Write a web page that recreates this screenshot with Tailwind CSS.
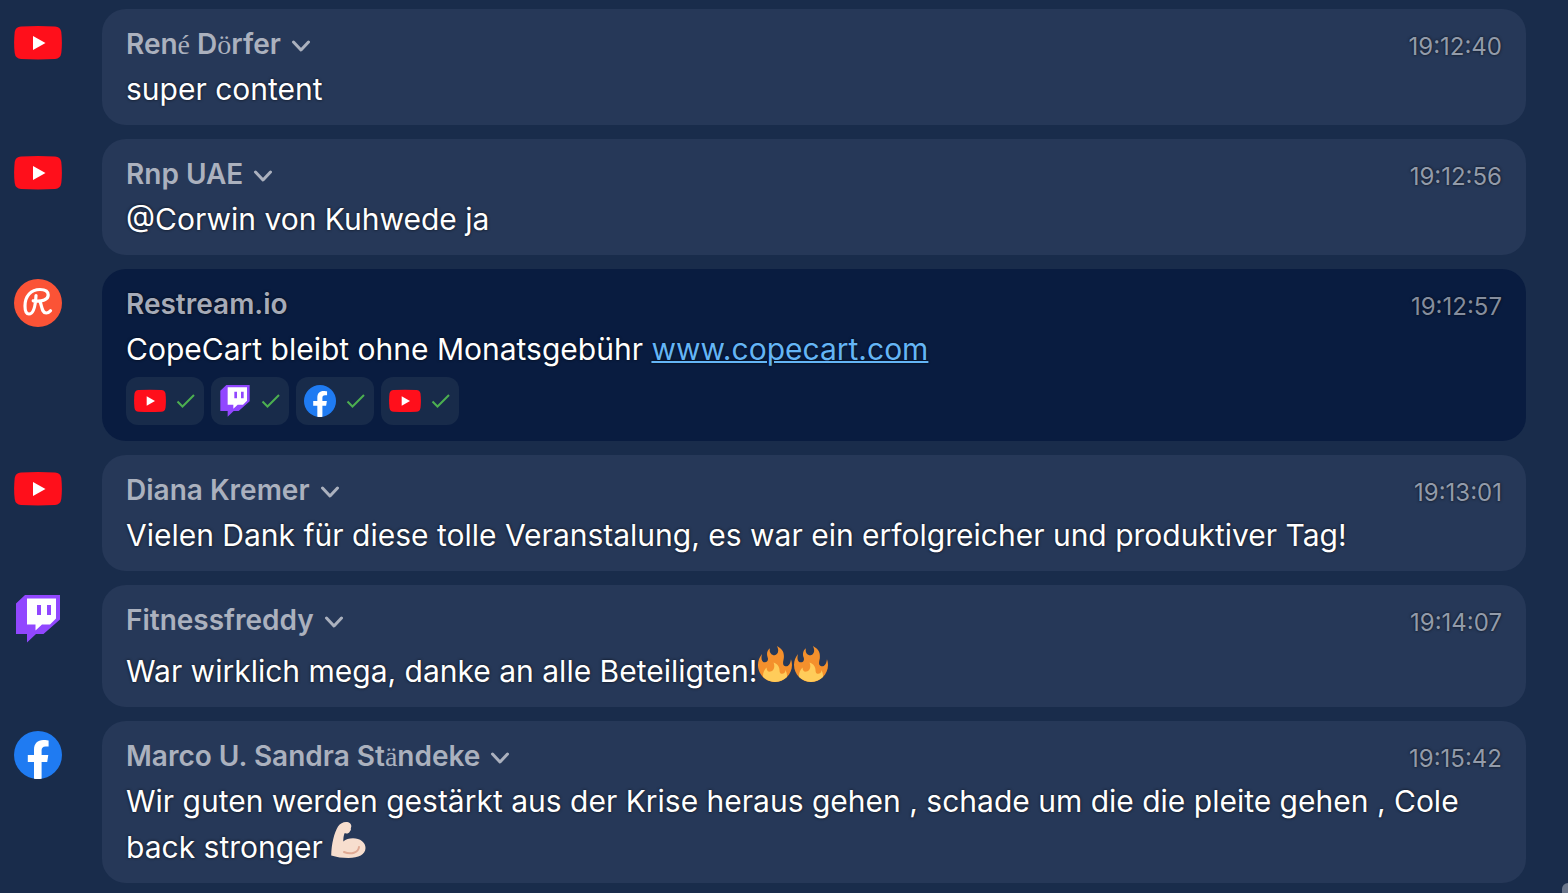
<!DOCTYPE html>
<html lang="de">
<head>
    <meta charset="UTF-8">
    <meta name="viewport" content="width=device-width, initial-scale=1.0">
    <title>Chat</title>
    <script src="https://cdn.jsdelivr.net/npm/@tailwindcss/browser@4"></script>
</head>
<body class="relative min-h-screen overflow-x-hidden bg-[#192c4b] font-['Inter','Liberation_Sans',sans-serif] text-white">
    <!-- Shared icons -->
    <svg class="hidden">
        <symbol id="youtube" viewBox="0 0 48 48">
            <path fill="#ff0f1b" d="M7 7.400Q24 6.600 41 7.400Q46.500 7.700 47.300 13Q48.500 24 47.300 34Q46.500 39.700 41 40Q24 40.800 7 40Q1.500 39.700 .7 34Q-.5 24 .7 13Q1.500 7.700 7 7.400Z"/>
            <path fill="#fff" d="M19 17v14l12.500-7z"/>
        </symbol>
        <symbol id="twitch" viewBox="0 0 48 48">
            <path fill="#9147ff" d="M11 0h35v24.500L29.500 39H22l-9 8.500V39H2V8.500z"/>
            <path fill="#fff" d="M13 3.500h29v20L36 29.500h-8l-6.500 6v-6H13z"/>
            <path fill="#9147ff" d="M23 10h4v10h-4zM33 10h4v10h-4z"/>
        </symbol>
        <symbol id="facebook" viewBox="0 0 48 48">
            <circle cx="24" cy="24" r="24" fill="#1f7bf2"/>
            <path fill="#fff" d="M20 47.700V31h-6.200v-7H20v-5.300C20 12.500 23.600 9 29.300 9c2.700 0 5.300.5 5.300.5v6h-3c-3 0-4 1.800-4 3.800V24h6.700l-1.100 7h-5.600v16.700a24 24 0 0 1-7.600 0z"/>
        </symbol>
        <symbol id="restream" viewBox="0 0 48 48">
            <circle cx="24" cy="24" r="24" fill="#fb5336"/>
            <path fill="none" stroke="#fff" stroke-width="3.200" stroke-linecap="round" stroke-linejoin="round" d="M22 16.500C21.500 26 20 35 15 35c-3 0-4-3-4-8 0-10 6-16.500 15-16.500 5 0 8.200 2 8.200 5.500 0 4.500-5.500 7-15 5.800M26 22.500c2 4.500 1.800 11.500 6.200 11.500 2 0 3.300-1 4.300-2.200"/>
        </symbol>
        <symbol id="chevron" viewBox="0 0 20 12">
            <path fill="none" stroke="#abb1be" stroke-width="3" stroke-linecap="round" stroke-linejoin="round" d="M2.500 2l7.500 8L17.500 2"/>
        </symbol>
        <symbol id="check" viewBox="0 0 20 16">
            <path fill="none" stroke="#4caf50" stroke-width="2" d="M1.500 8.500l5 5L18 2"/>
        </symbol>
        <symbol id="fire" viewBox="0 0 36 36">
            <path fill="#f4902c" d="M35 19c0-2.062-.367-4.039-1.040-5.868-.46 5.389-3.333 8.157-6.335 6.868-2.812-1.208-.917-5.917-.777-8.164.236-3.809-.012-8.169-6.931-11.794 2.875 5.500.333 8.917-2.333 9.125-2.958.231-5.667-2.542-4.667-7.042-3.238 2.386-3.332 6.402-2.333 9 1.042 2.708-.042 4.958-2.583 5.208-2.840.28-4.418-3.041-2.963-8.333C2.520 10.965 1 14.805 1 19c0 9.389 7.611 17 17 17s17-7.611 17-17z"/>
            <path fill="#ffcc5a" d="M28.394 23.999c.148 3.084-2.561 4.293-4.019 3.709-2.106-.843-1.541-2.291-2.083-5.291s-2.625-5.083-5.708-6c2.250 6.333-1.247 8.667-3.080 9.084-1.872.426-3.753-.001-3.968-4.007C7.352 23.668 6 26.676 6 30c0 .368.023.73.055 1.090C9.125 34.124 13.342 36 18 36s8.875-1.876 11.945-4.910c.032-.36.055-.722.055-1.090 0-2.187-.584-4.236-1.606-6.001z"/>
        </symbol>
        <symbol id="biceps" viewBox="0 0 36 36">
            <path fill="#f7dece" d="M15 0c3.500 0 5.500 2 5.300 4.500-.2 1-.6 1.500-.4 2.500.2 1.200-.6 1.800-1.200 2.700-.7 1.600-2.300 2-5.200 1.600-.9 2.500-1.200 5-1.200 8.200 2.500-2.300 5.700-3.200 9.700-3.200 7 0 12.500 4.200 12.500 9.700 0 6.500-7 10-17 10-6 0-12-.8-17.300-2.500C.5 22 3 11 7 4.500 9 1.500 12 0 15 0z"/>
            <path fill="none" stroke="#e0aa94" stroke-width="2" stroke-linecap="round" d="M28 25c-.5 5.500-8 8-15 5"/>
        </symbol>
    </svg>

    <main class="flex flex-col gap-3.5 py-[9px] pl-3.5 pr-[42px] [text-shadow:0_0_3px_#000c]">
        <article class="flex items-start gap-10">
            <svg class="mt-2.5 size-12 shrink-0" role="img" aria-label="YouTube"><use href="#youtube"/></svg>
            <div class="flex-1 rounded-3xl bg-[#263858] px-6 py-4">
                <header class="mb-1 flex h-10 items-center justify-between">
                    <button class="flex items-center gap-2.5 pb-0.5 text-[28px] font-semibold text-[#abb1be]"><span>Ren<span class="font-['Liberation_Serif'] font-normal">é</span> D<span class="font-['Liberation_Serif'] font-normal">ö</span>rfer</span><svg class="mt-1 h-3 w-5"><use href="#chevron"/></svg></button>
                    <time class="pt-1 text-2xl text-[#929baa]">19:12:40</time>
                </header>
                <p class="text-[30px] leading-10">super content</p>
            </div>
        </article>

        <article class="flex items-start gap-10">
            <svg class="mt-2.5 size-12 shrink-0" role="img" aria-label="YouTube"><use href="#youtube"/></svg>
            <div class="flex-1 rounded-3xl bg-[#263858] px-6 py-4">
                <header class="mb-1 flex h-10 items-center justify-between">
                    <button class="flex items-center gap-2.5 pb-0.5 text-[28px] font-semibold text-[#abb1be]">Rnp UAE<svg class="mt-1 h-3 w-5"><use href="#chevron"/></svg></button>
                    <time class="pt-1 text-2xl text-[#929baa]">19:12:56</time>
                </header>
                <p class="text-[30px] leading-10">@Corwin von Kuhwede ja</p>
            </div>
        </article>

        <article class="flex items-start gap-10">
            <svg class="mt-2.5 size-12 shrink-0" role="img" aria-label="Restream"><use href="#restream"/></svg>
            <div class="flex-1 rounded-3xl bg-[#091c40] px-6 py-4">
                <header class="mb-1 flex h-10 items-center justify-between">
                    <h2 class="pb-0.5 text-[28px] font-semibold text-[#a6abb8]">Restream.io</h2>
                    <time class="pt-1 text-2xl text-[#848d9e]">19:12:57</time>
                </header>
                <p class="text-[30px] leading-10">CopeCart bleibt ohne Monatsgebühr <a href="https://www.copecart.com" class="text-[#64b5f6] underline decoration-2">www.copecart.com</a></p>
                <ul class="mt-2 flex gap-[7px]">
                    <li class="flex h-12 w-[78px] items-center justify-between rounded-xl bg-[#182b4a] px-2"><svg class="size-8"><use href="#youtube"/></svg><svg class="h-4 w-5"><use href="#check"/></svg></li>
                    <li class="flex h-12 w-[78px] items-center justify-between rounded-xl bg-[#182b4a] px-2"><svg class="size-8"><use href="#twitch"/></svg><svg class="h-4 w-5"><use href="#check"/></svg></li>
                    <li class="flex h-12 w-[78px] items-center justify-between rounded-xl bg-[#182b4a] px-2"><svg class="size-8"><use href="#facebook"/></svg><svg class="h-4 w-5"><use href="#check"/></svg></li>
                    <li class="flex h-12 w-[78px] items-center justify-between rounded-xl bg-[#182b4a] px-2"><svg class="size-8"><use href="#youtube"/></svg><svg class="h-4 w-5"><use href="#check"/></svg></li>
                </ul>
            </div>
        </article>

        <article class="flex items-start gap-10">
            <svg class="mt-2.5 size-12 shrink-0" role="img" aria-label="YouTube"><use href="#youtube"/></svg>
            <div class="flex-1 rounded-3xl bg-[#263858] px-6 py-4">
                <header class="mb-1 flex h-10 items-center justify-between">
                    <button class="flex items-center gap-2.5 pb-0.5 text-[28px] font-semibold text-[#abb1be]">Diana Kremer<svg class="mt-1 h-3 w-5"><use href="#chevron"/></svg></button>
                    <time class="pt-1 text-2xl text-[#929baa]">19:13:01</time>
                </header>
                <p class="text-[30px] leading-10">Vielen Dank für diese tolle Veranstalung, es war ein erfolgreicher und produktiver Tag!</p>
            </div>
        </article>

        <article class="flex items-start gap-10">
            <svg class="mt-2.5 size-12 shrink-0" role="img" aria-label="Twitch"><use href="#twitch"/></svg>
            <div class="flex-1 rounded-3xl bg-[#263858] px-6 py-4">
                <header class="mb-1 flex h-10 items-center justify-between">
                    <button class="flex items-center gap-2.5 pb-0.5 text-[28px] font-semibold text-[#abb1be]">Fitnessfreddy<svg class="mt-1 h-3 w-5"><use href="#chevron"/></svg></button>
                    <time class="pt-1 text-2xl text-[#929baa]">19:14:07</time>
                </header>
                <p class="text-[30px] leading-10">War wirklich mega, danke an alle Beteiligten!<svg class="mt-px inline size-9 align-baseline"><use href="#fire"/></svg><svg class="mt-px inline size-9 align-baseline"><use href="#fire"/></svg></p>
            </div>
        </article>

        <article class="flex items-start gap-10">
            <svg class="mt-2.5 size-12 shrink-0" role="img" aria-label="Facebook"><use href="#facebook"/></svg>
            <div class="flex-1 rounded-3xl bg-[#263858] px-6 py-4">
                <header class="mb-1 flex h-10 items-center justify-between">
                    <button class="flex items-center gap-2.5 pb-0.5 text-[28px] font-semibold text-[#abb1be]"><span>Marco U. Sandra St<span class="font-['Liberation_Serif'] font-normal">ä</span>ndeke</span><svg class="mt-1 h-3 w-5"><use href="#chevron"/></svg></button>
                    <time class="pt-1 text-2xl text-[#929baa]">19:15:42</time>
                </header>
                <p class="text-[30px] leading-10">Wir guten werden gestärkt aus der Krise heraus gehen , schade um die die pleite gehen , Cole back stronger <svg class="mt-px inline size-9 align-baseline"><use href="#biceps"/></svg></p>
            </div>
        </article>
    </main>

    <!-- Scrollbar thumb -->
    <div class="absolute bottom-0 right-0 h-2.5 w-1.5 rounded-tl-md bg-[#69758a]"></div>
</body>
</html>
